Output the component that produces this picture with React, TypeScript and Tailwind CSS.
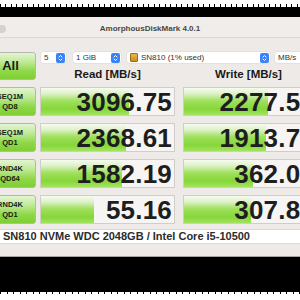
import React from 'react';

// ─────────────────────────────────────────────────────────────────────────────
const rows = [
  { l1: 'SEQ1M', l2: 'QD8', read: '3096.75', rw: 88, write: '2277.50', ww: 84 },
  { l1: 'SEQ1M', l2: 'QD1', read: '2368.61', rw: 85, write: '1913.76', ww: 82 },
  { l1: 'RND4K', l2: 'QD64', read: '1582.19', rw: 81, write: '362.09', ww: 69 },
  { l1: 'RND4K', l2: 'QD1', read: '55.16', rw: 53, write: '307.89', ww: 67 }
];

const barBg =
  'bg-[linear-gradient(to_bottom,#f6fbf0_0%,#dcf1c6_22%,#9ee05a_48%,#86d63a_78%,#a2e35e_100%)]';

const btnBg =
  'bg-[linear-gradient(to_bottom,#e4f5d2_0%,#bfe995_35%,#8ed846_70%,#7fcf34_100%)]';

/* blue up/down stepper on the popups */
const Stepper = () => (
  <span className="w-[9px] h-[10px] rounded-[2px] bg-[#3a82f7] flex items-center justify-center shrink-0">
    <svg width="5" height="8" viewBox="0 0 5 8" fill="none" stroke="white" strokeWidth="1" strokeLinecap="round" strokeLinejoin="round">
      <path d="M1 3 L2.5 1.5 L4 3" />
      <path d="M1 5 L2.5 6.5 L4 5" />
    </svg>
  </span>
);

const Popup = ({ w, children, stepper = true }: { w: string; children: React.ReactNode; stepper?: boolean }) => (
  <div className={`${w} h-[11px] bg-white rounded-[3px] shadow-[0_0_0_0.5px_#dcd8d4] flex items-center justify-between pl-[3px] pr-[1px] shrink-0`}>
    <span className="flex items-center gap-[3px] text-[8px] leading-none text-[#333]">{children}</span>
    {stepper && <Stepper />}
  </div>
);

const ValueCell = ({ text, w }: { text: string; w: number }) => (
  <div
    className={`w-[135px] h-[29px] shrink-0 border border-[#d2cdc9] bg-[#f7f5f3] ${barBg} bg-no-repeat flex items-center justify-end pr-[2px]`}
    style={{ backgroundSize: `${w}px 100%` }}
  >
    <span className="text-[26px] font-bold leading-none text-[#1e1e1e] tracking-[0.2px]">{text}</span>
  </div>
);

export default function App() {
  return (
    <div className="w-[300px] h-[300px] overflow-hidden bg-white font-['Liberation_Sans',Arial,sans-serif]">
      {/* screen above the window */}
      <div className="h-[4px] bg-white" />
      <div className="h-[3px] bg-[repeating-linear-gradient(90deg,#000_0_1px,#fff_1px_5px,#000_5px_6px,#fff_6px_11px)]" />
      <div className="h-[10px] bg-black" />

      {/* title bar */}
      <div className="h-[21px] bg-[#f1edea] border-b border-[#dcd7d3] grid grid-cols-[1fr_auto_1fr] items-center pt-[4px]">
        <div className="-ml-[2px] w-[8px] h-[8px] rounded-full bg-[#d5d1ce]" />
        <div className="text-[8px] font-bold text-[#4a4744] leading-none">AmorphousDiskMark 4.0.1</div>
        <div />
      </div>

      {/* body */}
      <div className="h-[218px] bg-[#eeeae7] pt-[14px] flex flex-col">
        <div className="flex gap-[4px] -ml-[16px]">
          <div className={`w-[52px] h-[28px] shrink-0 rounded-[3px] border border-[#b9b5b1] ${btnBg} flex items-center justify-center pl-[13px]`}>
            <span className="text-[13px] font-bold text-[#1a1a1a] -ml-[12px]">All</span>
          </div>
          <div className="flex flex-col">
            <div className="flex items-center pl-[1px]">
              <Popup w="w-[25px]">5</Popup>
              <div className="w-[7px]" />
              <Popup w="w-[48px]">1 GiB</Popup>
              <div className="w-[6px]" />
              <Popup w="w-[143px]">
                <span className="w-[8px] h-[9px] rounded-[1px] bg-[linear-gradient(to_bottom,#e8b84e,#c98f22)] border border-[#9c6c18]" />
                SN810 (1% used)
              </Popup>
              <div className="w-[5px]" />
              <Popup w="w-[60px]" stepper={false}>MB/s</Popup>
            </div>
            <div className="flex gap-[6px] mt-[5px]">
              <div className="w-[135px] text-center text-[11.5px] font-bold text-[#1a1a1a] leading-[13px]">Read [MB/s]</div>
              <div className="w-[135px] text-center text-[11.5px] font-bold text-[#1a1a1a] leading-[13px]">Write [MB/s]</div>
            </div>
          </div>
        </div>

        {/* result rows */}
        <div className="flex flex-col gap-[7px] mt-[6px] -ml-[16px]">
          {rows.map((r, i) => (
            <div key={i} className="flex gap-[4px]">
              <div className={`w-[52px] h-[29px] shrink-0 rounded-[3px] border border-[#b9b5b1] ${btnBg} flex flex-col items-center justify-center`}>
                <span className="text-[7.5px] font-bold leading-[9.5px] text-[#1a1a1a]">{r.l1}</span>
                <span className="text-[7.5px] font-bold leading-[9.5px] text-[#1a1a1a]">{r.l2}</span>
              </div>
              <ValueCell text={r.read} w={r.rw} />
              <div className="w-[2px]" />
              <ValueCell text={r.write} w={r.ww} />
            </div>
          ))}
        </div>

        {/* comment field */}
        <div className="mt-[5px] h-[15px] bg-white border-y border-[#dedad6] flex items-center pl-[3px]">
          <span className="text-[11px] font-bold text-[#2c2c2c] leading-none whitespace-nowrap">
            SN810 NVMe WDC 2048GB / Intel Core i5-10500
          </span>
        </div>
        <div className="flex-1" />
      </div>
      <div className="h-[1px] bg-[#a8a4a0]" />

      {/* screen below the window */}
      <div className="h-[35px] bg-black" />
      <div className="h-[2px] bg-[repeating-linear-gradient(90deg,#000_0_1px,#fff_1px_7px,#000_7px_8px,#fff_8px_13px)]" />
      <div className="h-[8px] bg-white" />
    </div>
  );
}
